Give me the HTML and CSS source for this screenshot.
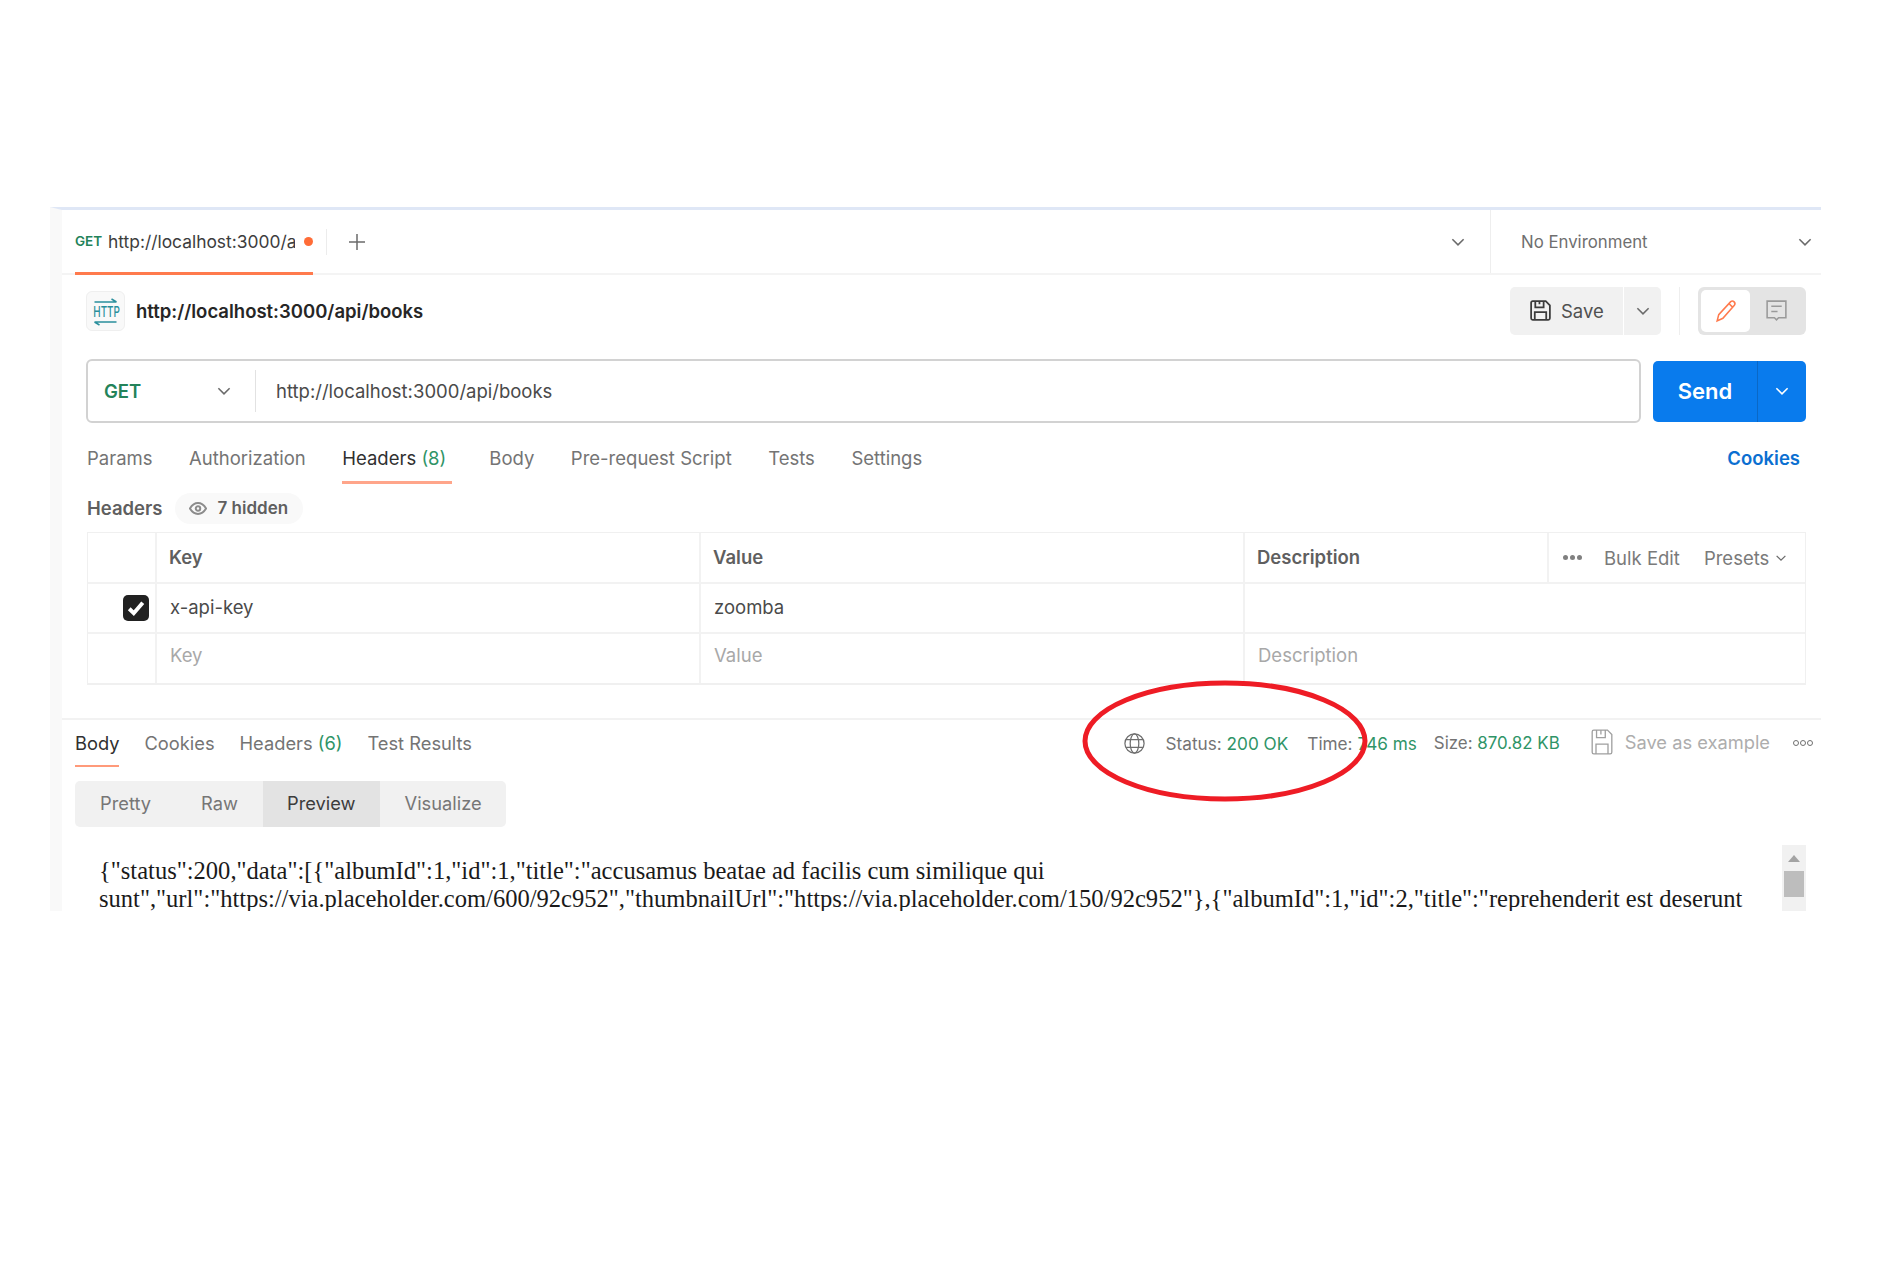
FILE: index.html
```html
<!DOCTYPE html>
<html lang="en">
<head>
  <meta charset="UTF-8" />
  <title>Postman request</title>
  <link rel="stylesheet" href="styles.css">
</head>
<body>
  <div class="window">
    <!-- Top tab strip -->
    <div class="tabbar">
      <div class="tab">
        <span class="tab-method">GET</span>
        <span class="tab-url">http://localhost:3000/ap</span>
        <span class="tab-dot"></span>
      </div>
      <span class="tab-sep"></span>
      <svg class="plus" viewBox="0 0 20 20"><path d="M10 2v16M2 10h16"/></svg>
      <svg class="chev tab-more" viewBox="0 0 16 16"><path d="M3 5.5l5 5 5-5"/></svg>
      <div class="env">
        <span>No Environment</span>
        <svg class="chev" viewBox="0 0 16 16"><path d="M3 5.5l5 5 5-5"/></svg>
      </div>
    </div>

    <!-- Request title row -->
    <div class="title-row">
      <span class="http-icon">
        <svg viewBox="0 0 24 28"><path d="M1 4h22M18 1l5 3M23 24H1M6 27l-5-3"/></svg>
        <span class="http-label">HTTP</span>
      </span>
      <span class="req-name">http://localhost:3000/api/books</span>
      <div class="save-group">
        <button class="save-btn">
          <svg class="save-icon" viewBox="0 0 24 24"><path d="M3 4.5A1.5 1.5 0 0 1 4.5 3H17l4 4v12.5a1.5 1.5 0 0 1-1.5 1.5h-15A1.5 1.5 0 0 1 3 19.5zM7 3v6h8V3M11 3v3M6.5 21v-7.5h11V21"/></svg>
          Save
        </button>
        <button class="save-drop"><svg class="chev" viewBox="0 0 16 16"><path d="M3 5.5l5 5 5-5"/></svg></button>
      </div>
      <span class="title-sep"></span>
      <div class="toggle">
        <span class="toggle-on">
          <svg viewBox="0 0 24 24"><path d="M4 22l1.5-6L17 3.5a2.5 2.5 0 0 1 3.5 3.5L9.5 19.5zM15.5 5.5l3.5 3.5"/></svg>
        </span>
        <span class="toggle-off">
          <svg viewBox="0 0 24 24"><path d="M3 3h18v16h-7l-2 2-2-2H3zM7 8h10M7 13h6"/></svg>
        </span>
      </div>
    </div>

    <!-- URL bar -->
    <div class="url-row">
      <div class="url-box">
        <span class="method">GET</span>
        <svg class="chev method-chev" viewBox="0 0 16 16"><path d="M3 5.5l5 5 5-5"/></svg>
        <span class="url-text">http://localhost:3000/api/books</span>
      </div>
      <div class="send">
        <span class="send-label">Send</span>
        <span class="send-drop"><svg class="chev" viewBox="0 0 16 16"><path d="M3 5.5l5 5 5-5"/></svg></span>
      </div>
    </div>

    <!-- Request tabs -->
    <div class="req-tabs">
      <span class="rt">Params</span>
      <span class="rt">Authorization</span>
      <span class="rt rt-active">Headers <em>(8)</em></span>
      <span class="rt">Body</span>
      <span class="rt">Pre-request Script</span>
      <span class="rt">Tests</span>
      <span class="rt">Settings</span>
      <span class="cookies">Cookies</span>
    </div>

    <div class="headers-label">
      <b>Headers</b>
      <span class="hidden-pill">
        <svg viewBox="0 0 20 14"><path d="M1 7c2.5-4 5.5-6 9-6s6.5 2 9 6c-2.5 4-5.5 6-9 6s-6.5-2-9-6z"/><circle cx="10" cy="7" r="2.5"/></svg>
        7 hidden
      </span>
    </div>

    <!-- Headers table -->
    <div class="table">
      <div class="row row-head">
        <div class="cell c-check"></div>
        <div class="cell c-key th">Key</div>
        <div class="cell c-val th">Value</div>
        <div class="cell c-desc th">Description</div>
        <div class="cell c-tools">
          <span class="dots"><i></i><i></i><i></i></span>
          <span>Bulk Edit</span>
          <span class="presets">Presets <svg class="chev" viewBox="0 0 16 16"><path d="M3 5.5l5 5 5-5"/></svg></span>
        </div>
      </div>
      <div class="row">
        <div class="cell c-check">
          <span class="checkbox"><svg viewBox="0 0 16 16"><path d="M3.5 8.5l3 3 6-7"/></svg></span>
        </div>
        <div class="cell c-key td">x-api-key</div>
        <div class="cell c-val td">zoomba</div>
        <div class="cell c-rest"></div>
      </div>
      <div class="row row-new">
        <div class="cell c-check"></div>
        <div class="cell c-key td ph">Key</div>
        <div class="cell c-val td ph">Value</div>
        <div class="cell c-rest td ph">Description</div>
      </div>
    </div>

    <!-- Response -->
    <div class="resp-bar">
      <span class="rs rs-active">Body</span>
      <span class="rs">Cookies</span>
      <span class="rs">Headers <em>(6)</em></span>
      <span class="rs">Test Results</span>
      <div class="resp-meta">
        <svg class="globe" viewBox="0 0 24 24"><circle cx="12" cy="12" r="10"/><ellipse cx="12" cy="12" rx="4.5" ry="10"/><path d="M3 8h18M3 16h18"/></svg>
        <span class="stat stat-status">Status: <em>200 OK</em></span>
        <span class="stat stat-time">Time: <em>746 ms</em></span>
        <span class="stat stat-size">Size: <em>870.82 KB</em></span>
        <svg class="save-ex-icon" viewBox="0 0 22 26" preserveAspectRatio="none"><path d="M2 3.5A1.5 1.5 0 0 1 3.5 2H16l4 4v16.5a1.5 1.5 0 0 1-1.5 1.5h-15A1.5 1.5 0 0 1 2 22.5zM6 2v7h8V2M10 2v4M5.5 24v-9h11v9"/></svg>
        <span class="save-ex">Save as example</span>
        <span class="ring-dots"><i></i><i></i><i></i></span>
      </div>
    </div>

    <div class="view-tabs">
      <span class="vt">Pretty</span>
      <span class="vt">Raw</span>
      <span class="vt vt-active">Preview</span>
      <span class="vt">Visualize</span>
    </div>

    <div class="preview">
      <div class="preview-text">{"status":200,"data":[{"albumId":1,"id":1,"title":"accusamus beatae ad facilis cum similique qui sunt","url":"https://via.placeholder.com/600/92c952","thumbnailUrl":"https://via.placeholder.com/150/92c952"},{"albumId":1,"id":2,"title":"reprehenderit est deserunt</div>
      <div class="scrollbar">
        <span class="sb-arrow"></span>
        <span class="sb-thumb"></span>
      </div>
    </div>
  </div>

  <!-- Red marker drawn over the screenshot -->
  <svg class="marker" viewBox="0 0 288 126"><ellipse cx="144" cy="63" rx="140" ry="58"/></svg>
</body>
</html>
```

FILE: styles.css
```css
* {
  box-sizing: border-box;
}

body {
  margin: 0;
  background: #fff;
  font-family: Inter, "Noto Sans", sans-serif;
  font-size: 18.5px;
  color: #6b6b6b;
  height: 1280px;
  overflow: hidden;
  position: relative;
}

em {
  font-style: normal;
  color: #2f9467;
}

svg {
  display: block;
  fill: none;
  stroke: currentColor;
}

button {
  font: inherit;
  border: 0;
  color: inherit;
  padding: 0;
}

.chev {
  width: 18px;
  height: 18px;
  stroke-width: 1.4;
  color: #6b6b6b;
}

.window {
  position: absolute;
  left: 50px;
  top: 207px;
  width: 1771px;
  height: 704px;
  overflow: hidden;
  border-top: 3px solid #dfe7f6;
  border-left: 12px solid #f9f9f9;
}

/* tab strip */
.tabbar {
  display: flex;
  align-items: center;
  height: 65px;
  margin-left: -12px;
  padding-left: 25px;
  border-bottom: 2px solid #f4f4f4;
  position: relative;
  background: #fff;
}

.tab {
  display: flex;
  align-items: center;
  width: 238px;
  height: 65px;
  border-bottom: 3px solid #ff7a4d;
  margin-bottom: -2px;
}

.tab-method {
  font-size: 13.5px;
  font-weight: 600;
  color: #23835a;
  width: 33px;
}

.tab-url {
  width: 187px;
  overflow: hidden;
  white-space: nowrap;
  font-size: 17.4px;
  color: #3d3d3d;
}

.tab-dot {
  width: 9px;
  height: 9px;
  border-radius: 50%;
  background: #ff6c37;
  margin-left: 9px;
}

.tab-sep {
  width: 1px;
  height: 26px;
  margin-left: 13px;
  background: #ececec;
}

.plus {
  width: 20px;
  height: 20px;
  margin-left: 20px;
  stroke-width: 1.5;
  color: #6b6b6b;
}

.tab-more {
  margin-left: auto;
  margin-right: 23px;
}

.env {
  display: flex;
  align-items: center;
  justify-content: space-between;
  width: 331px;
  height: 63px;
  padding: 0 7px 0 30px;
  border-left: 1px solid #eeeeee;
  font-size: 16.8px;
  color: #6f6f6f;
}

/* title row */
.title-row {
  display: flex;
  align-items: center;
  height: 71px;
  padding: 0 15px 0 24px;
}

.http-icon {
  position: relative;
  width: 39px;
  height: 40px;
  border: 1px solid #efefef;
  border-radius: 6px;
  background: #f9f9f9;
  color: #2a8f9c;
}

.http-icon svg {
  position: absolute;
  left: 6px;
  top: 6px;
  width: 25px;
  height: 28px;
  stroke-width: 1.5;
}

.http-label {
  position: absolute;
  left: 0;
  right: 0;
  top: 12px;
  text-align: center;
  font-size: 15px;
  line-height: 15px;
  font-weight: 500;
  transform: scaleX(.66);
}

.req-name {
  margin-left: 11px;
  font-weight: 600;
  color: #262626;
}

.save-group {
  display: flex;
  margin-left: auto;
  height: 48px;
}

.save-btn {
  display: flex;
  align-items: center;
  gap: 8px;
  width: 113px;
  padding-left: 18px;
  background: #f1f1f1;
  border-radius: 5px 0 0 5px;
  color: #505050;
}

.save-icon {
  width: 25px;
  height: 25px;
  stroke-width: 1.7;
  color: #3c3c3c;
}

.save-drop {
  display: flex;
  align-items: center;
  justify-content: center;
  width: 37px;
  margin-left: 1px;
  background: #f1f1f1;
  border-radius: 0 5px 5px 0;
}

.title-sep {
  width: 1px;
  height: 48px;
  margin: 0 18px;
  background: #eeeeee;
}

.toggle {
  display: flex;
  width: 108px;
  height: 48px;
  padding: 3px;
  background: #e4e4e4;
  border-radius: 6px;
}

.toggle-on,
.toggle-off {
  display: flex;
  align-items: center;
  justify-content: center;
}

.toggle-on {
  width: 49px;
  background: #fff;
  border-radius: 5px;
  color: #ff7a4d;
}

.toggle-off {
  flex: 1;
  color: #9a9a9a;
}

.toggle svg {
  width: 25px;
  height: 25px;
  stroke-width: 1.5;
}

/* url bar */
.url-row {
  display: flex;
  height: 64px;
  margin-top: 13px;
  padding: 0 15px 0 24px;
  gap: 12px;
}

.url-box {
  display: flex;
  align-items: center;
  flex: 1;
  padding-bottom: 1px;
  border: 2px solid #d2d2d2;
  border-radius: 6px;
  position: relative;
}

.method {
  margin-left: 16px;
  width: 109px;
  font-weight: 600;
  color: #23835a;
}

.method-chev {
  position: absolute;
  left: 127px;
}

.url-text {
  height: 42px;
  line-height: 42px;
  padding-left: 20px;
  margin-left: 42px;
  border-left: 1px solid #e2e2e2;
  color: #4a4a4a;
}

.send {
  display: flex;
  width: 153px;
  height: 61px;
  margin-top: 2px;
  background: #097bed;
  border-radius: 5px;
  color: #fff;
}

.send-label {
  display: flex;
  align-items: center;
  justify-content: center;
  width: 104px;
  padding-bottom: 2px;
  font-size: 22px;
  font-weight: 600;
}

.send-drop {
  display: flex;
  align-items: center;
  justify-content: center;
  flex: 1;
  padding-bottom: 2px;
  border-left: 1px solid #0a68c6;
}

.send-drop .chev {
  color: #fff;
}

/* request tabs */
.req-tabs {
  display: flex;
  align-items: center;
  height: 59px;
  padding: 11px 21px 0 25px;
  color: #747474;
}

.rt {
  position: relative;
  margin-right: 36.5px;
  white-space: nowrap;
}

.rt-active {
  margin-right: 43px;
  color: #303030;
}

.rt-active::after {
  content: "";
  position: absolute;
  left: 0;
  right: -6px;
  bottom: -15px;
  height: 3px;
  background: #ffa58a;
}

.cookies {
  margin-left: auto;
  color: #0b6fd1;
  font-weight: 600;
}

.headers-label {
  display: flex;
  align-items: center;
  height: 52px;
  margin-top: -2px;
  padding: 4px 0 0 25px;
  color: #5f5f5f;
}

.headers-label b {
  font-weight: 600;
}

.hidden-pill {
  display: flex;
  align-items: center;
  gap: 11px;
  height: 31px;
  margin-left: 12px;
  padding: 0 15px 0 14px;
  border-radius: 16px;
  background: #f9f9f9;
  font-weight: 600;
  font-size: 17px;
}

.hidden-pill svg {
  width: 18px;
  height: 13px;
  stroke-width: 2.2;
  color: #8c8c8c;
}

/* headers table */
.table {
  margin: 0 15px 0 25px;
  border: 1px solid #f0f0f0;
  border-bottom-width: 2px;
}

.row {
  display: flex;
  height: 50px;
  border-bottom: 2px solid #f2f2f2;
}

.row-head {
  height: 51px;
}

.row-new {
  height: 49px;
  border-bottom: 0;
}

.row .td {
  padding-bottom: 2px;
}

.row-new .td {
  padding-bottom: 8px;
}

.cell {
  display: flex;
  align-items: center;
  border-right: 2px solid #f2f2f2;
}

.c-check {
  width: 69px;
  justify-content: flex-end;
  padding-right: 6px;
}

.c-key {
  width: 544px;
}

.c-val {
  width: 544px;
}

.c-desc {
  width: 304px;
}

.c-rest {
  flex: 1;
  border-right: 0;
}

.c-tools {
  flex: 1;
  gap: 22px;
  padding-left: 14px;
  border-right: 0;
  color: #7a7a7a;
}

.th {
  padding: 0 0 1px 12px;
  font-weight: 600;
  color: #5f5f5f;
}

.td {
  padding-left: 13px;
  color: #4a4a4a;
}

.ph {
  color: #a8a8a8;
}

.dots {
  display: flex;
  gap: 2px;
}

.dots i {
  width: 5px;
  height: 5px;
  border-radius: 50%;
  background: #808080;
}

.presets {
  display: flex;
  align-items: center;
  gap: 5px;
  margin-left: 2px;
}

.presets .chev {
  width: 14px;
  height: 14px;
}

.checkbox {
  display: flex;
  align-items: center;
  justify-content: center;
  width: 26px;
  height: 26px;
  border-radius: 5px;
  background: #212121;
  color: #fff;
}

.checkbox svg {
  width: 24px;
  height: 24px;
  stroke-width: 2.6;
}

/* response */
.resp-bar {
  display: flex;
  align-items: center;
  height: 48px;
  margin-top: 33px;
  padding: 0 8px 0 13px;
  border-top: 2px solid #f2f2f2;
  font-size: 18.3px;
  color: #747474;
  position: relative;
}

.rs {
  position: relative;
  margin-right: 25px;
  white-space: nowrap;
}

.rs-active {
  color: #303030;
}

.rs-active::after {
  content: "";
  position: absolute;
  left: 0;
  right: 0;
  bottom: -13px;
  height: 2px;
  background: #ff9a7a;
}

.resp-meta {
  display: flex;
  align-items: center;
  margin-left: auto;
  font-size: 17.2px;
}

.globe {
  width: 23px;
  height: 23px;
  stroke-width: 1.3;
  color: #6f6f6f;
}

.stat {
  white-space: nowrap;
}

.stat-status {
  margin-left: 20px;
}

.stat-time {
  margin-left: 19px;
}

.stat-size {
  margin-left: 17px;
  font-size: 16.9px;
}

.save-ex-icon {
  width: 24px;
  height: 28px;
  margin: 0 0 2px 30px;
  stroke-width: 1.2;
  color: #9f9f9f;
}

.save-ex {
  margin: 0 0 3px 11px;
  font-size: 18.3px;
  color: #adadad;
}

.ring-dots {
  display: flex;
  gap: 1px;
  margin-left: 23px;
}

.ring-dots i {
  width: 6px;
  height: 6px;
  border: 1.5px solid #707070;
  border-radius: 50%;
}

.view-tabs {
  display: flex;
  width: 431px;
  height: 46px;
  margin: 15px 0 0 13px;
  background: #f1f1f1;
  border-radius: 5px;
  font-size: 18.3px;
  overflow: hidden;
}

.vt {
  display: flex;
  align-items: center;
  padding: 0 25px 3px;
  color: #767676;
}

.vt-active {
  width: 118px;
  padding: 0 24px 3px;
  background: #e3e3e3;
  color: #3c3c3c;
}

.preview {
  display: flex;
  height: 67px;
  margin-top: 18px;
  padding: 0 15px 0 37px;
}

.preview-text {
  flex: 1;
  padding-top: 12px;
  font-family: "Liberation Serif", serif;
  font-size: 24.55px;
  line-height: 28px;
  color: #1a1a1a;
}

.scrollbar {
  position: relative;
  width: 24px;
  margin-left: 26px;
  background: #f1f1f1;
}

.sb-arrow {
  position: absolute;
  left: 6px;
  top: 10px;
  border-left: 6px solid transparent;
  border-right: 6px solid transparent;
  border-bottom: 7px solid #a3a3a3;
}

.sb-thumb {
  position: absolute;
  left: 2px;
  right: 2px;
  top: 26px;
  height: 26px;
  background: #bdbdbd;
}

/* red hand drawn ring */
.marker {
  position: absolute;
  left: 1081px;
  top: 678px;
  width: 288px;
  height: 126px;
  stroke: #ee1c25;
  stroke-width: 5;
}
```
